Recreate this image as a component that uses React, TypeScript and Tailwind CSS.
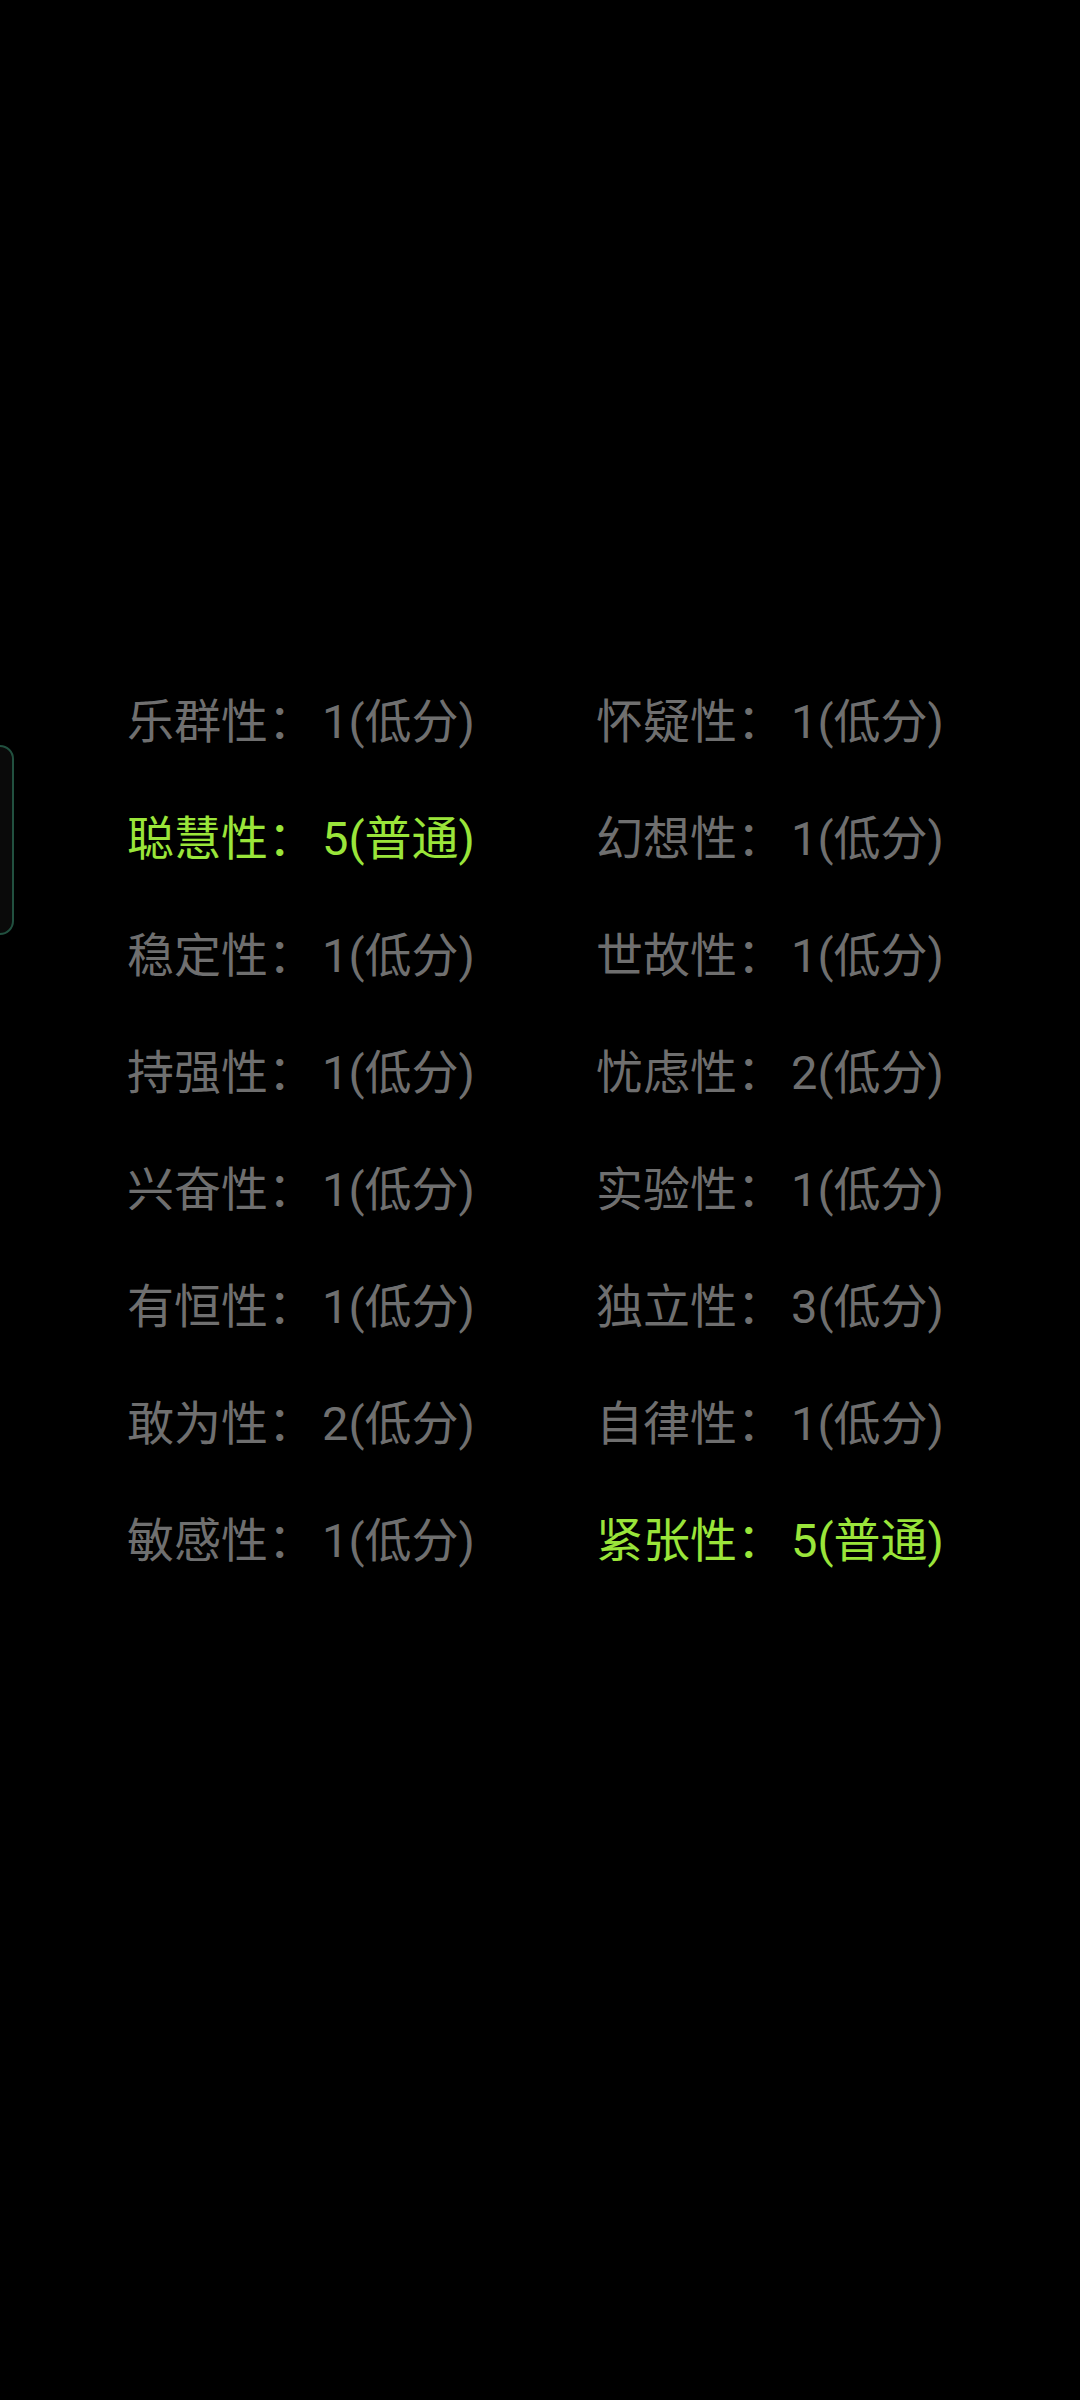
import React from "react";

type Item = { label: string; value: string; hi?: boolean };

const left: Item[] = [
  { label: "乐群性", value: "1(低分)" },
  { label: "聪慧性", value: "5(普通)", hi: true },
  { label: "稳定性", value: "1(低分)" },
  { label: "持强性", value: "1(低分)" },
  { label: "兴奋性", value: "1(低分)" },
  { label: "有恒性", value: "1(低分)" },
  { label: "敢为性", value: "2(低分)" },
  { label: "敏感性", value: "1(低分)" },
];

const right: Item[] = [
  { label: "怀疑性", value: "1(低分)" },
  { label: "幻想性", value: "1(低分)" },
  { label: "世故性", value: "1(低分)" },
  { label: "忧虑性", value: "2(低分)" },
  { label: "实验性", value: "1(低分)" },
  { label: "独立性", value: "3(低分)" },
  { label: "自律性", value: "1(低分)" },
  { label: "紧张性", value: "5(普通)", hi: true },
];

function Cell({ item }: { item: Item }) {
  return (
    <div
      className={`h-[117px] flex items-center text-[47px] leading-none whitespace-nowrap ${
        item.hi ? "text-[#9ae53a]" : "text-[#6f6f6f]"
      }`}
      style={{ fontFamily: 'Roboto, "Noto Sans CJK SC", sans-serif' }}
    >
      <span>{item.label}：</span>
      <span className="ml-[7px]">{item.value}</span>
    </div>
  );
}

export default function App() {
  return (
    <div className="relative w-[1080px] h-[2400px] bg-black overflow-hidden">
      <div className="absolute left-[-20px] top-[745px] w-[34px] h-[190px] rounded-[14px] border-2 border-[#21503f] bg-[#0a0a0a]" />
      <div className="pt-[663px] pl-[127px] grid grid-cols-[469px_auto]">
        <div className="flex flex-col">
          {left.map((it) => (
            <Cell key={it.label} item={it} />
          ))}
        </div>
        <div className="flex flex-col">
          {right.map((it) => (
            <Cell key={it.label} item={it} />
          ))}
        </div>
      </div>
    </div>
  );
}
